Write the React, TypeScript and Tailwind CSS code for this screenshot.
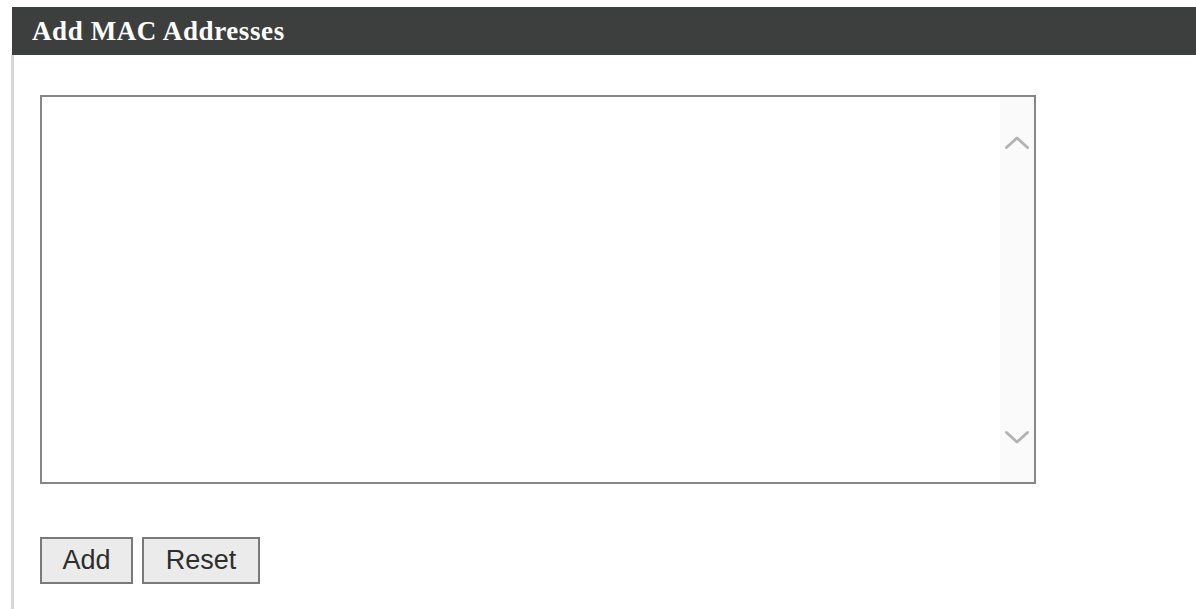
import { useState } from "react";

// small chevron used on the fake scrollbar track
function Chevron({ dir }: { dir: "up" | "down" }) {
  return (
    <svg width="26" height="15" viewBox="0 0 26 15" fill="none">
      <path
        d={dir === "up" ? "M2.5 12.5 L13 3 L23.5 12.5" : "M2.5 2.5 L13 12 L23.5 2.5"}
        stroke="#b3b3b3"
        strokeWidth="3"
        strokeLinecap="round"
        strokeLinejoin="round"
      />
    </svg>
  );
}

export default function App() {
  const [macs, setMacs] = useState("");

  return (
    <div className="h-screen flex flex-col bg-white pt-[7px] pl-[11px]">
      {/* section title */}
      <div className="ml-px h-[48px] bg-[#3d3f3e] flex items-center pl-[20px]">
        <h2 className="text-[27px] font-bold text-white tracking-[0.6px] font-['Liberation_Serif','Times_New_Roman',serif] leading-none mt-[1px]">
          Add MAC Addresses
        </h2>
      </div>

      <div className="flex-1 border-l-[3px] border-[#d6d6d6] pl-[26px] pt-[40px]">
        {/* address list */}
        <div className="w-[996px] h-[389px] border-2 border-[#878787] flex bg-white">
          <textarea
            value={macs}
            onChange={(e) => setMacs(e.target.value)}
            className="flex-1 resize-none outline-none overflow-hidden p-1 text-[20px] font-['Liberation_Mono',monospace]"
          />
          <div className="w-[34px] bg-[#fafafa] flex flex-col items-center justify-between pt-[38px] pb-[37px]">
            <Chevron dir="up" />
            <Chevron dir="down" />
          </div>
        </div>

        <div className="flex gap-[9px] mt-[53px] font-['Liberation_Sans',Arial,sans-serif]">
          <button className="w-[93px] h-[47px] border-2 border-[#7a7a7a] bg-[#ebebeb] text-[27px] text-[#2e2e2e] leading-none">
            Add
          </button>
          <button
            onClick={() => setMacs("")}
            className="w-[118px] h-[47px] border-2 border-[#7a7a7a] bg-[#ebebeb] text-[27px] text-[#2e2e2e] leading-none"
          >
            Reset
          </button>
        </div>
      </div>
    </div>
  );
}
